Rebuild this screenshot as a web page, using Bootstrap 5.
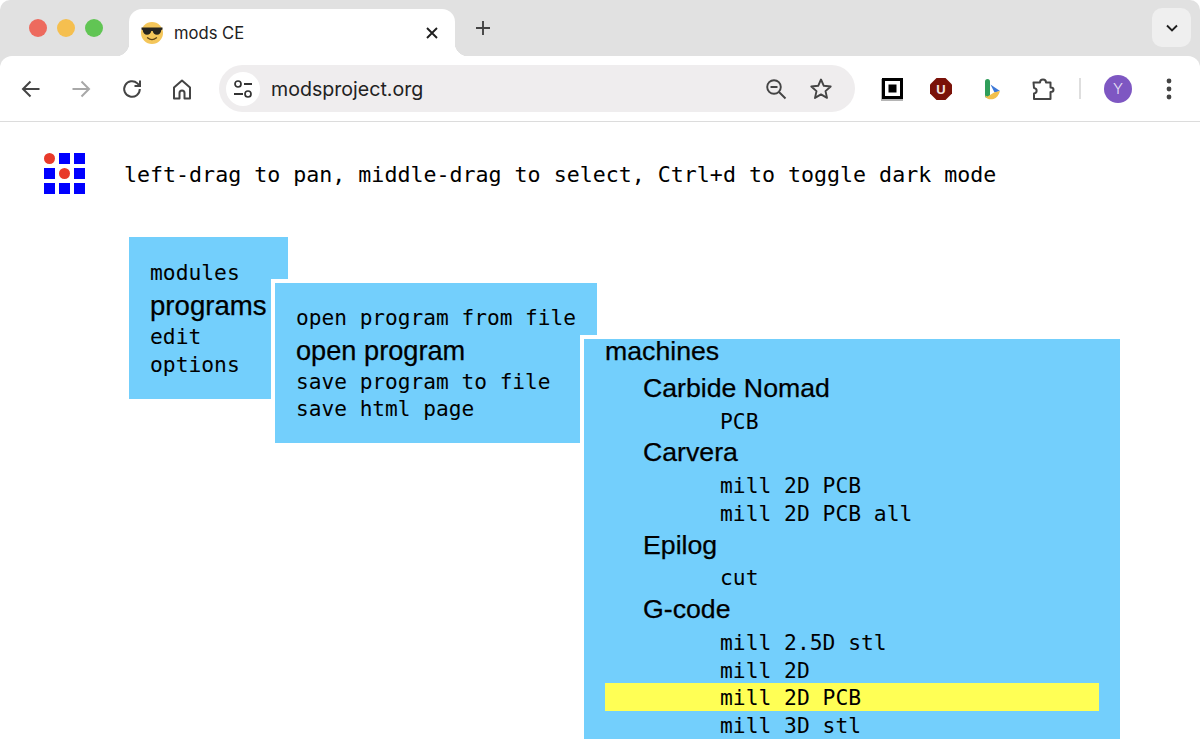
<!DOCTYPE html>
<html lang="en">
<head>
  <meta charset="UTF-8" />
  <meta name="viewport" content="width=device-width, initial-scale=1" />
  <title>mods CE</title>
  <link href="https://cdn.jsdelivr.net/npm/bootstrap@5.3.0/dist/css/bootstrap.min.css" rel="stylesheet" />
  <style>
    body { background: #fff; overflow: hidden; height: 751px; font-family: "Liberation Sans", sans-serif; }
    /* browser chrome */
    .chrome-top { background: #e1e1e1; border-radius: 10px 10px 0 0; }
    .tab-strip { height: 56px; padding-left: 29px; }
    .lights { gap: 10px; width: 100px; }
    .light { width: 18px; height: 18px; border-radius: 50%; }
    .browser-tab { width: 326px; height: 47px; margin-top: 9px; background: #fff; border-radius: 13px 13px 0 0; padding: 0 12px 0 12px; position: relative; font: 16.6px Inter, sans-serif; color: #222; }
    .browser-tab::before, .browser-tab::after { content: ""; position: absolute; bottom: 0; width: 13px; height: 13px; }
    .browser-tab::before { left: -13px; background: radial-gradient(circle at 0 0, transparent 13px, #fff 13.5px); }
    .browser-tab::after { right: -13px; background: radial-gradient(circle at 100% 0, transparent 13px, #fff 13.5px); }
    .tab-plus { margin-left: 12px; margin-top: 9px; height: 38px; }
    .tab-menu { width: 39px; height: 39px; margin: 8px 9px 0 auto; background: #efefef; border-radius: 10px; }
    .tool-bar { height: 66px; background: #fff; border-radius: 12px 12px 0 0; border-bottom: 1px solid #dcdcdc; padding-left: 19px; }
    .tool-btn { width: 24px; height: 24px; }
    .nav-icons { gap: 26.4px; width: 200px; }
    .address-bar { width: 636px; height: 47px; background: #efedee; border-radius: 24px; padding: 0 22px 0 7px; font: 19.6px Inter, sans-serif; color: #222; }
    .site-chip { width: 34px; height: 34px; background: #fff; border-radius: 50%; margin-right: 11px; }
    .ext-icons { margin-left: 25px; }
    .ext-rule { width: 2px; height: 21px; background: #dedede; margin: 0 23px 0 24px; }
    .avatar-dot { width: 28px; height: 28px; border-radius: 50%; background: #7e57c2; color: #e8e0f5; font: 300 15px Inter, sans-serif; }
    /* page */
    .mods-canvas { position: relative; height: 629px; }
    .mods-head { padding: 31px 0 0 44px; gap: 39px; height: 72px; }
    .head-text { font-family: "DejaVu Sans Mono", "Liberation Mono", monospace; color: #000; font-size: 21.63px; line-height: 43px; }
    .menu-panel { position: absolute; background: #73cffc; padding: 21px; white-space: nowrap; color: #000; }
    .menu-outlined { outline: 4px solid #fff; }
    .panel-modules { left: 129px; top: 115px; padding-top: 21.5px; }
    .panel-programs { left: 275px; top: 161px; padding-bottom: 20px; }
    .panel-machines { left: 584px; top: 217px; width: 536px; padding-top: 0; padding-bottom: 0.5px; }
    .row-mono { font-family: "DejaVu Sans Mono", "Liberation Mono", monospace; font-size: 21.3px; line-height: 28.5px; height: 27.6px; }
    .panel-programs .row-mono { font-size: 21.15px; height: 27.3px; }
    .panel-machines .row-mono { line-height: 30px; }
    .row-sans { font-family: "Liberation Sans", sans-serif; font-size: 26.7px; line-height: 36.9px; height: 36.9px; -webkit-text-stroke: 0.25px #000; }
    .sans-modules { font-size: 27.6px; line-height: 39px; }
    .sans-programs { font-size: 27.2px; line-height: 40.5px; }
    .row-first { line-height: 24px; height: 31px; }
    .indent-1 { padding-left: 38px; }
    .indent-2 { padding-left: 115px; }
    .row-hit { background: #ffff55; }
  </style>
</head>
<body>

  <div class="chrome-top">
    <div class="tab-strip d-flex">
      <div class="lights d-flex align-items-center">
        <span class="light" style="background:#ed6a5e"></span>
        <span class="light" style="background:#f5bf4f"></span>
        <span class="light" style="background:#61c554"></span>
      </div>
      <div class="browser-tab d-flex align-items-center">
        <svg width="22" height="22" viewBox="0 0 22 22" class="flex-shrink-0" style="margin-right:11px">
          <circle cx="11" cy="11" r="11" fill="#f4c65a"/>
          <path d="M0.500 5.500h21v2l-1.200 0.400c-0.300 3.200-2 4.800-4.300 4.800-2.400 0-3.900-1.600-4.300-3.700h-1.400c-0.400 2.100-1.900 3.700-4.300 3.700-2.300 0-4-1.600-4.300-4.800l-1.200-0.400z" fill="#26241f"/>
          <path d="M6.500 15.800c2.700 2.200 6.300 2.200 9 0" fill="none" stroke="#5e4214" stroke-width="1.300" stroke-linecap="round"/>
        </svg>
        <span>mods CE</span>
        <svg width="14" height="14" viewBox="0 0 14 14" class="ms-auto me-1"><path d="M2 2l10 10M12 2L2 12" stroke="#1f1f1f" stroke-width="1.900" fill="none"/></svg>
      </div>
      <div class="tab-plus d-flex align-items-center">
        <svg width="16" height="16" viewBox="0 0 16 16" class="ms-2"><path d="M8 1v14M1 8h14" stroke="#444" stroke-width="1.900" fill="none"/></svg>
      </div>
      <div class="tab-menu d-flex align-items-center justify-content-center">
        <svg width="14" height="10" viewBox="0 0 14 10"><path d="M2 2.500l5 5 5-5" stroke="#1f1f1f" stroke-width="1.900" fill="none"/></svg>
      </div>
    </div>
    <div class="tool-bar d-flex align-items-center">
      <div class="nav-icons d-flex align-items-center">
        <svg class="tool-btn" viewBox="0 0 24 24"><path d="M20.500 12H4.500M11.500 4.500L4 12l7.500 7.500" stroke="#444" stroke-width="2" fill="none"/></svg>
        <svg class="tool-btn" viewBox="0 0 24 24"><path d="M3.500 12h16M12.500 4.500L20 12l-7.500 7.500" stroke="#a8a8a8" stroke-width="2" fill="none"/></svg>
        <svg class="tool-btn" viewBox="0 0 24 24"><path d="M19.800 12a7.800 7.800 0 1 1-2.400-5.600L20 9M20 3.500V9h-5.500" stroke="#444" stroke-width="2" fill="none"/></svg>
        <svg class="tool-btn" viewBox="0 0 24 24"><path d="M4 21.500V10.500L12 3.500l8 7v11h-5.500v-5.500a2.500 2.500 0 0 0-5 0v5.500z" stroke="#444" stroke-width="2" fill="none" stroke-linejoin="round"/></svg>
      </div>
      <div class="address-bar d-flex align-items-center">
        <div class="site-chip d-flex align-items-center justify-content-center">
          <svg width="20" height="20" viewBox="0 0 20 20"><circle cx="5" cy="5" r="3" stroke="#333" stroke-width="1.700" fill="none"/><path d="M11 5h8M1 15h9" stroke="#333" stroke-width="1.800" fill="none"/><circle cx="15" cy="15" r="3" stroke="#333" stroke-width="1.700" fill="none"/></svg>
        </div>
        <span>modsproject.org</span>
        <svg width="24" height="24" viewBox="0 0 24 24" class="ms-auto"><circle cx="10" cy="10" r="6.800" stroke="#444" stroke-width="1.900" fill="none"/><path d="M6.500 10h7M15 15l6.500 6.500" stroke="#444" stroke-width="1.900" fill="none"/></svg>
        <svg width="24" height="24" viewBox="0 0 24 24" style="margin-left:21px"><path d="M12 2.500l2.800 6.300 6.900 0.700-5.200 4.600 1.500 6.800-6-3.500-6 3.500 1.500-6.800-5.200-4.600 6.900-0.700z" stroke="#444" stroke-width="1.900" fill="none" stroke-linejoin="round"/></svg>
      </div>
      <div class="ext-icons d-flex align-items-center">
        <svg width="24" height="24" viewBox="0 0 24 24" style="margin-left:1px;margin-right:24px"><rect x="0" y="2" width="22" height="22" fill="#b5b5b5"/><rect x="1" y="1" width="21" height="21" fill="#000"/><rect x="4" y="4" width="15" height="15" fill="#fff"/><rect x="7.500" y="7.500" width="8" height="8" fill="#000"/></svg>
        <svg width="24" height="24" viewBox="0 0 24 24" style="margin-right:27px"><path d="M7.500 1h9L23 7.500v9L16.500 23h-9L1 16.500v-9z" fill="#7a1209"/><text x="12" y="16.800" text-anchor="middle" font-family="Liberation Sans" font-weight="700" font-size="13" fill="#f3e4e2">U</text></svg>
        <svg width="24" height="24" viewBox="0 0 24 24" style="margin-right:27px"><path d="M7.500 4.500v14" stroke="#2f9e5a" stroke-width="5" fill="none" stroke-linecap="round"/><path d="M10.500 7.500l9.500 6.500-5.500 1.500z" fill="#3c78d8"/><path d="M5 18.500c1 3.500 5 4.500 8.500 3.500 3-1 5.500-4 6.500-8l-6 1.500-4 2.500-2.500 1.500z" fill="#f2c04c"/></svg>
        <svg width="24" height="24" viewBox="0 0 24 24"><path d="M2.500 5.500h6.500c0-4 6-4 6 0h4.500v5c4 0 4 4.500 0 4.500v7H3v-5.500c3.500-0.500 3.500-5 0-5.500z" stroke="#444" stroke-width="2" fill="none" stroke-linejoin="round"/></svg>
        <span class="ext-rule"></span>
        <span class="avatar-dot d-flex align-items-center justify-content-center">Y</span>
        <svg width="6" height="22" viewBox="0 0 6 22" style="margin-left:34px"><circle cx="3" cy="3" r="2.400" fill="#444"/><circle cx="3" cy="11" r="2.400" fill="#444"/><circle cx="3" cy="19" r="2.400" fill="#444"/></svg>
      </div>
    </div>
  </div>

  <div class="mods-canvas">
    <div class="mods-head d-flex">
      <svg width="41" height="41" viewBox="0 0 41 41" class="flex-shrink-0">
        <rect x="15" y="0" width="11" height="11" fill="#00f"/>
        <rect x="30" y="0" width="11" height="11" fill="#00f"/>
        <rect x="0" y="15" width="11" height="11" fill="#00f"/>
        <rect x="30" y="15" width="11" height="11" fill="#00f"/>
        <rect x="0" y="30" width="11" height="11" fill="#00f"/>
        <rect x="15" y="30" width="11" height="11" fill="#00f"/>
        <rect x="30" y="30" width="11" height="11" fill="#00f"/>
        <circle cx="5.500" cy="5.500" r="5.500" fill="#e83a2a"/>
        <circle cx="20.500" cy="20.500" r="5.500" fill="#e83a2a"/>
      </svg>
      <div class="head-text">left-drag to pan, middle-drag to select, Ctrl+d to toggle dark mode</div>
    </div>

    <div class="menu-panel panel-modules">
      <div class="row-mono">modules</div>
      <div class="row-sans sans-modules">programs</div>
      <div class="row-mono">edit</div>
      <div class="row-mono">options</div>
    </div>

    <div class="menu-panel menu-outlined panel-programs">
      <div class="row-mono">open program from file</div>
      <div class="row-sans sans-programs">open program</div>
      <div class="row-mono">save program to file</div>
      <div class="row-mono">save html page</div>
    </div>

    <div class="menu-panel menu-outlined panel-machines">
      <div class="row-sans row-first">machines</div>
      <div class="row-sans indent-1">Carbide Nomad</div>
      <div class="row-mono indent-2">PCB</div>
      <div class="row-sans indent-1">Carvera</div>
      <div class="row-mono indent-2">mill 2D PCB</div>
      <div class="row-mono indent-2">mill 2D PCB all</div>
      <div class="row-sans indent-1">Epilog</div>
      <div class="row-mono indent-2">cut</div>
      <div class="row-sans indent-1">G-code</div>
      <div class="row-mono indent-2">mill 2.5D stl</div>
      <div class="row-mono indent-2">mill 2D</div>
      <div class="row-mono indent-2 row-hit">mill 2D PCB</div>
      <div class="row-mono indent-2">mill 3D stl</div>
    </div>
  </div>

  <script src="https://cdn.jsdelivr.net/npm/bootstrap@5.3.0/dist/js/bootstrap.bundle.min.js"></script>
</body>
</html>
